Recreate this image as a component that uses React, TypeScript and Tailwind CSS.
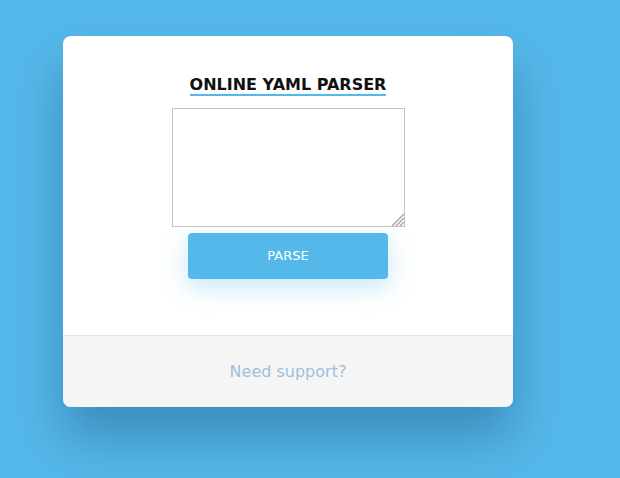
export default function App() {
  return (
    <div
      className="min-h-screen w-full bg-[#55b8ea] pt-[36px] pl-[63px]"
      style={{ fontFamily: '"DejaVu Sans", sans-serif' }}
    >
      <div className="w-[450px] overflow-hidden rounded-[8px] bg-white shadow-[0_30px_50px_rgba(0,40,80,0.3)]">
        <div className="flex h-[299px] flex-col items-center pt-[39px]">
          <h1 className="border-b-2 border-[#55b8ea] text-[16px] leading-[19px] font-bold text-[#111]">
            ONLINE YAML PARSER
          </h1>
          <div className="relative mt-[12px] h-[119px] w-[233px]">
            <textarea className="block h-full w-full resize-none border border-[#c8c3be] bg-white p-1 outline-none" />
            {/* resize grip */}
            <svg
              className="pointer-events-none absolute right-[1px] bottom-[1px]"
              width="14"
              height="14"
              viewBox="0 0 14 14"
            >
              <path
                d="M14 2 L2 14 M14 6 L6 14 M14 10 L10 14"
                stroke="#a9a9a9"
                strokeWidth="1.5"
              />
            </svg>
          </div>
          <button className="mt-[6px] h-[46px] w-[200px] rounded-[4px] bg-[#55b8ea] text-[13px] text-white shadow-[0_8px_25px_rgba(85,184,234,0.35)]">
            PARSE
          </button>
        </div>
        <div className="flex h-[72px] items-center justify-center border-t border-[#e2e6ea] bg-[#f5f5f5]">
          <a className="text-[16px] text-[#9dc0de]">Need support?</a>
        </div>
      </div>
    </div>
  );
}
